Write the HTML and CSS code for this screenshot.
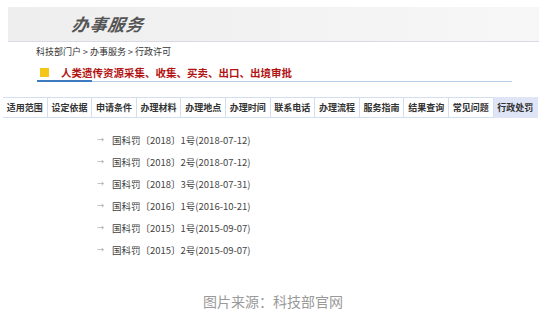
FILE: index.html
```html
<!DOCTYPE html>
<html>
<head>
    <meta charset="utf-8"/>
    <title>办事服务</title>
    <link rel="stylesheet" href="styles.css">
</head>
<body>
<div class="page">
    <div class="banner">
        <span class="banner-title">办事服务</span>
    </div>
    <div class="crumbs">科技部门户 &gt; 办事服务 &gt; 行政许可</div>
    <div class="title">
        <span class="mark"></span>
        <span class="title-text">人类遗传资源采集、收集、买卖、出口、出境审批</span>
    </div>
    <ul class="tabs">
        <li>适用范围</li>
        <li>设定依据</li>
        <li>申请条件</li>
        <li>办理材料</li>
        <li>办理地点</li>
        <li>办理时间</li>
        <li>联系电话</li>
        <li>办理流程</li>
        <li>服务指南</li>
        <li>结果查询</li>
        <li>常见问题</li>
        <li class="active">行政处罚</li>
    </ul>
    <ul class="docs">
        <li><span class="arrow">→</span>国科罚〔2018〕1号(2018-07-12)</li>
        <li><span class="arrow">→</span>国科罚〔2018〕2号(2018-07-12)</li>
        <li><span class="arrow">→</span>国科罚〔2018〕3号(2018-07-31)</li>
        <li><span class="arrow">→</span>国科罚〔2016〕1号(2016-10-21)</li>
        <li><span class="arrow">→</span>国科罚〔2015〕1号(2015-09-07)</li>
        <li><span class="arrow">→</span>国科罚〔2015〕2号(2015-09-07)</li>
    </ul>
    <div class="source">图片来源：科技部官网</div>
</div>
</body>
</html>
```

FILE: styles.css
```css
html, body, div, span, ul, li {
    margin: 0;
    padding: 0;
}

body {
    background: #fff;
    color: #444;
    font-family: "Noto Sans CJK SC", "Liberation Sans", sans-serif;
    font-size: 10px;
}

.page {
    width: 546px;
    height: 317px;
    overflow: hidden;
}

.banner {
    margin: 7px 7px 0 8px;
    height: 34px;
    background: linear-gradient(90deg, #eeeeee 0%, #f3f3f3 60%, #f7f7f7 100%);
    border-bottom: 1px solid #d8dbe6;
}

.banner-title {
    display: inline-block;
    margin: 4px 0 0 64px;
    font-size: 17px;
    font-weight: bold;
    font-style: italic;
    letter-spacing: 1px;
    color: #555;
    transform: skewX(-8deg);
}

.crumbs {
    margin: 3px 0 0 36px;
    font-size: 9px;
    line-height: 14px;
    color: #333;
}

.title {
    margin: 5px 0 0 37px;
    width: 475px;
    height: 17px;
    display: flex;
    align-items: center;
    border-bottom: 1px solid #b9d0e4;
    position: relative;
}

.title::after {
    content: "";
    position: absolute;
    left: 0;
    bottom: -1px;
    width: 55px;
    height: 2px;
    background: #3d7ac0;
}

.mark {
    width: 9px;
    height: 9px;
    background: #f5c518;
    margin: 0 12px 0 3px;
}

.title-text {
    font-size: 10.5px;
    font-weight: bold;
    color: #b21414;
}

.tabs {
    list-style: none;
    display: flex;
    margin: 15px 0 0 3px;
    height: 21px;
}

.tabs li {
    box-sizing: border-box;
    width: 44.6px;
    flex: none;
    border: 1px solid #d3def0;
    border-left: none;
    font-size: 9px;
    font-weight: bold;
    line-height: 19px;
    text-align: center;
    color: #333;
    white-space: nowrap;
}

.tabs li.active {
    background: #dfe4f6;
    border-color: #dfe4f6;
}

.docs {
    list-style: none;
    margin: 10px 0 0 97px;
}

.docs li {
    height: 22px;
    line-height: 22px;
    font-size: 9.5px;
    color: #444;
    white-space: nowrap;
}

.arrow {
    display: inline-block;
    width: 15px;
    font-size: 7px;
    color: #999;
    vertical-align: 2px;
}

.source {
    margin-top: 31px;
    text-align: center;
    font-size: 14px;
    color: #999;
}
```
